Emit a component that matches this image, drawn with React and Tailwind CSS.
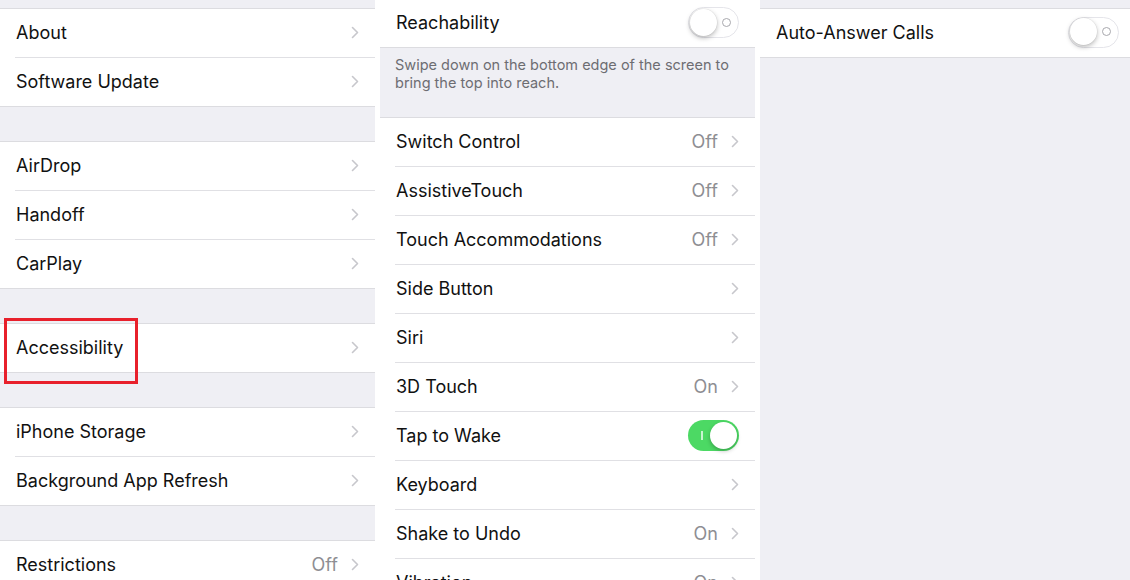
import React from "react";

const font = { fontFamily: "Inter, 'Liberation Sans', sans-serif" };

function Chevron() {
  return (
    <svg width="8" height="13" viewBox="0 0 8 13" className="shrink-0">
      <polyline points="1.5,1.5 6.5,6.5 1.5,11.5" fill="none" stroke="#c7c7cc" strokeWidth="1.6" strokeLinecap="round" strokeLinejoin="round" />
    </svg>
  );
}

function Toggle({ on }) {
  if (on) {
    return (
      <div className="relative h-[31px] w-[51px] shrink-0 rounded-full bg-[#4cd964]">
        <div className="absolute left-[13px] top-[11px] h-[9px] w-[1.5px] bg-white/70" />
        <div className="absolute right-[2px] top-[2px] h-[27px] w-[27px] rounded-full bg-white shadow-[0_2px_4px_rgba(0,0,0,0.25)]" />
      </div>
    );
  }
  return (
    <div className="relative h-[31px] w-[51px] shrink-0 rounded-full border-[1.5px] border-[#e5e5ea] bg-white">
      <div className="absolute right-[7px] top-[9.5px] h-[9px] w-[9px] rounded-full border border-[#a8a8ad]" />
      <div className="absolute left-[0.5px] top-[0.5px] h-[27px] w-[27px] rounded-full bg-white shadow-[0_2px_5px_rgba(0,0,0,0.28),0_0_0_0.5px_rgba(0,0,0,0.06)]" />
    </div>
  );
}

function Row({ label, value, toggle, last, h = "h-[48px]", chevron = true }) {
  return (
    <>
      <div className={`flex ${h} items-center pb-[2px] pl-4 pr-[16px]`}>
        <span className="flex-1 text-[18px] text-[#111]">{label}</span>
        {toggle !== undefined ? (
          <Toggle on={toggle} />
        ) : (
          <div className="flex items-center gap-[13px]">
            {value && <span className="text-[18px] text-[#8e8e93]">{value}</span>}
            {chevron && <Chevron />}
          </div>
        )}
      </div>
      {!last && <div className="ml-[15px] h-px bg-[#e0e0e4]" />}
    </>
  );
}

function Group({ rows, top = true }) {
  return (
    <div className={`bg-white ${top ? "border-t" : ""} border-b border-[#dcdce0]`}>
      {rows.map((r, i) => (
        <Row key={r.label} {...r} last={i === rows.length - 1} />
      ))}
    </div>
  );
}

export default function App() {
  return (
    <div className="flex h-[580px] w-[1130px] gap-[5px] overflow-hidden bg-white" style={font}>
      <div className="relative w-[375px] shrink-0 bg-[#efeff4]">
        <div className="h-[8px]" />
        <Group rows={[{ label: "About" }, { label: "Software Update" }]} />
        <div className="h-[34px]" />
        <Group rows={[{ label: "AirDrop" }, { label: "Handoff" }, { label: "CarPlay" }]} />
        <div className="h-[34px]" />
        <Group rows={[{ label: "Accessibility" }]} />
        <div className="h-[34px]" />
        <Group rows={[{ label: "iPhone Storage" }, { label: "Background App Refresh" }]} />
        <div className="h-[34px]" />
        <Group rows={[{ label: "Restrictions", value: "Off" }]} />
        <div className="absolute left-[4px] top-[318px] h-[66px] w-[134px] border-[3px] border-[#e8202b]" />
      </div>

      <div className="w-[375px] shrink-0 bg-[#efeff4]">
        <div className="border-b border-[#dcdce0] bg-white">
          <Row label="Reachability" toggle={false} last h="h-[47px]" />
        </div>
        <div className="h-[69px] pl-[15px] pr-4 pt-[8px] text-[14.5px] leading-[18px] text-[#6d6d72]">
          Swipe down on the bottom edge of the screen to bring the top into reach.
        </div>
        <Group
          rows={[
            { label: "Switch Control", value: "Off" },
            { label: "AssistiveTouch", value: "Off" },
            { label: "Touch Accommodations", value: "Off" },
            { label: "Side Button" },
            { label: "Siri" },
            { label: "3D Touch", value: "On" },
            { label: "Tap to Wake", toggle: true },
            { label: "Keyboard" },
            { label: "Shake to Undo", value: "On" },
            { label: "Vibration", value: "On" },
          ]}
        />
      </div>

      <div className="w-[375px] shrink-0 bg-[#efeff4]">
        <div className="h-[8px]" />
        <Group rows={[{ label: "Auto-Answer Calls", toggle: false }]} />
      </div>
    </div>
  );
}
